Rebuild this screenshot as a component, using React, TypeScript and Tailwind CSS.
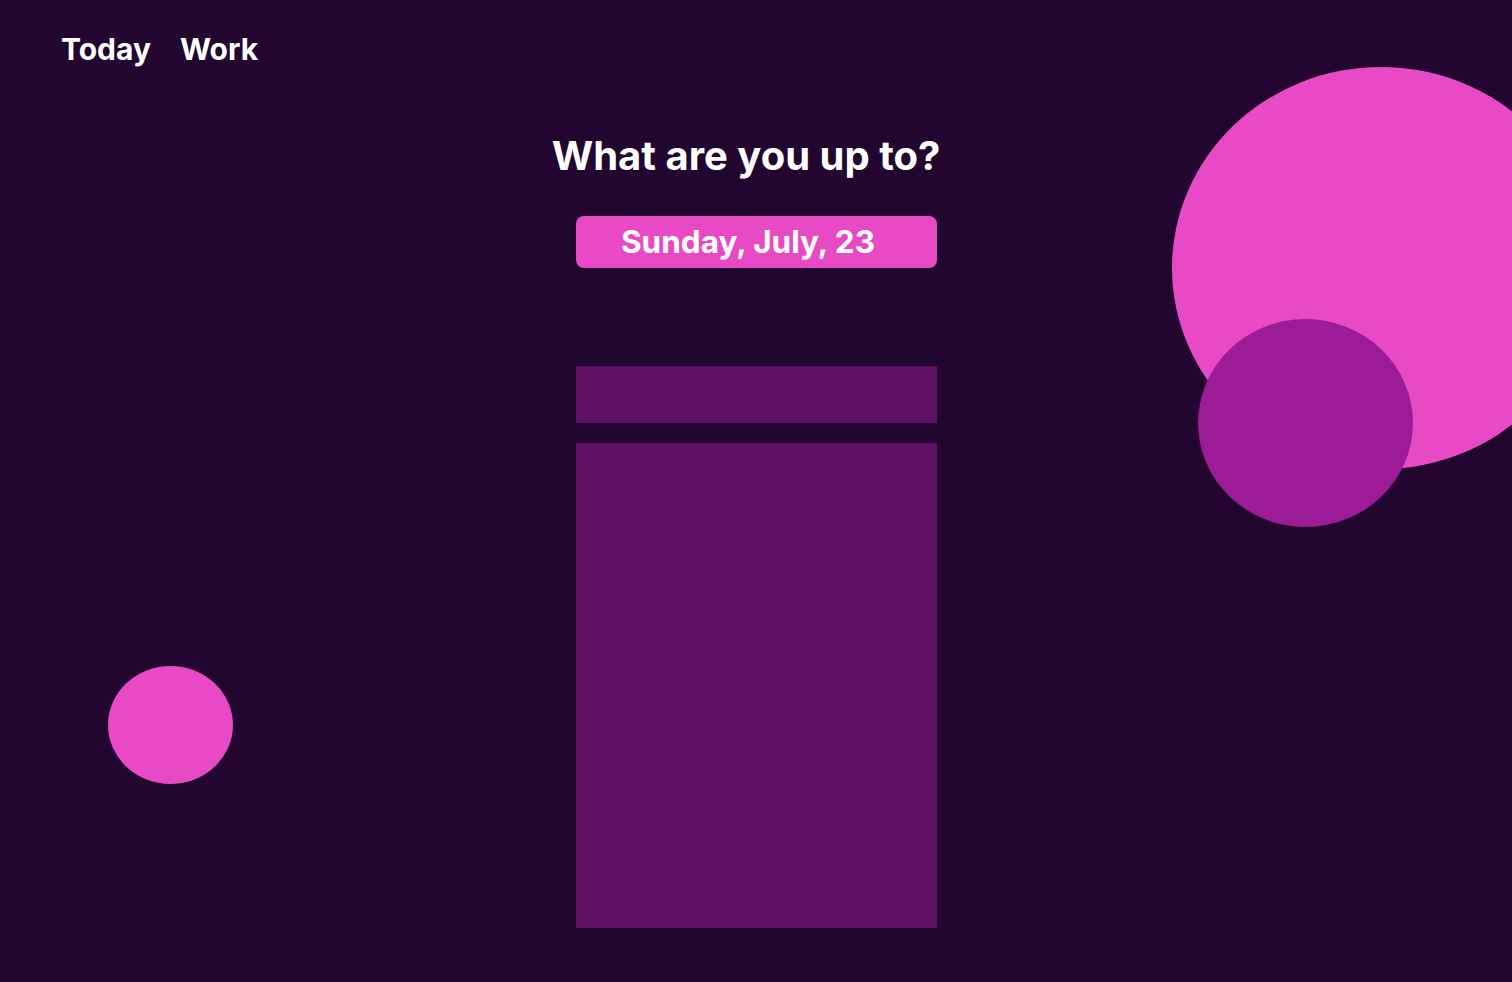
import React from "react";

export default function App() {
  return (
    <div
      className="relative h-[982px] w-full overflow-hidden bg-[#220630] text-white"
      style={{ fontFamily: "Inter, 'Noto Sans', sans-serif" }}
    >
      <div className="pointer-events-none absolute left-[1172px] top-[67px] h-[402px] w-[418px] rounded-[50%] bg-[#e84ac5]" />
      <div className="pointer-events-none absolute left-[1198px] top-[319px] h-[208px] w-[215px] rounded-[50%] bg-[#9c1b96]" />
      <div className="pointer-events-none absolute left-[108px] top-[666px] h-[118px] w-[125px] rounded-[50%] bg-[#e84ac5]" />

      <nav className="relative flex gap-[29px] pl-[61px] pt-[30px] text-[30px] font-bold leading-[38px]">
        <span>Today</span>
        <span>Work</span>
      </nav>

      <main className="relative mx-auto flex w-[361px] flex-col items-center">
        <h1 className="mt-[60px] mr-[20px] whitespace-nowrap text-[40px] font-bold leading-[56px]">
          What are you up to?
        </h1>
        <div className="mt-[32px] flex h-[52px] w-full items-center justify-center rounded-[8px] bg-[#e84ac5] pr-[16px] text-[31.5px] font-bold">
          Sunday, July, 23
        </div>
        <div className="mt-[98px] h-[57px] w-full bg-[#5e1162]" />
        <div className="mt-[20px] h-[485px] w-full bg-[#5e1162]" />
      </main>
    </div>
  );
}
